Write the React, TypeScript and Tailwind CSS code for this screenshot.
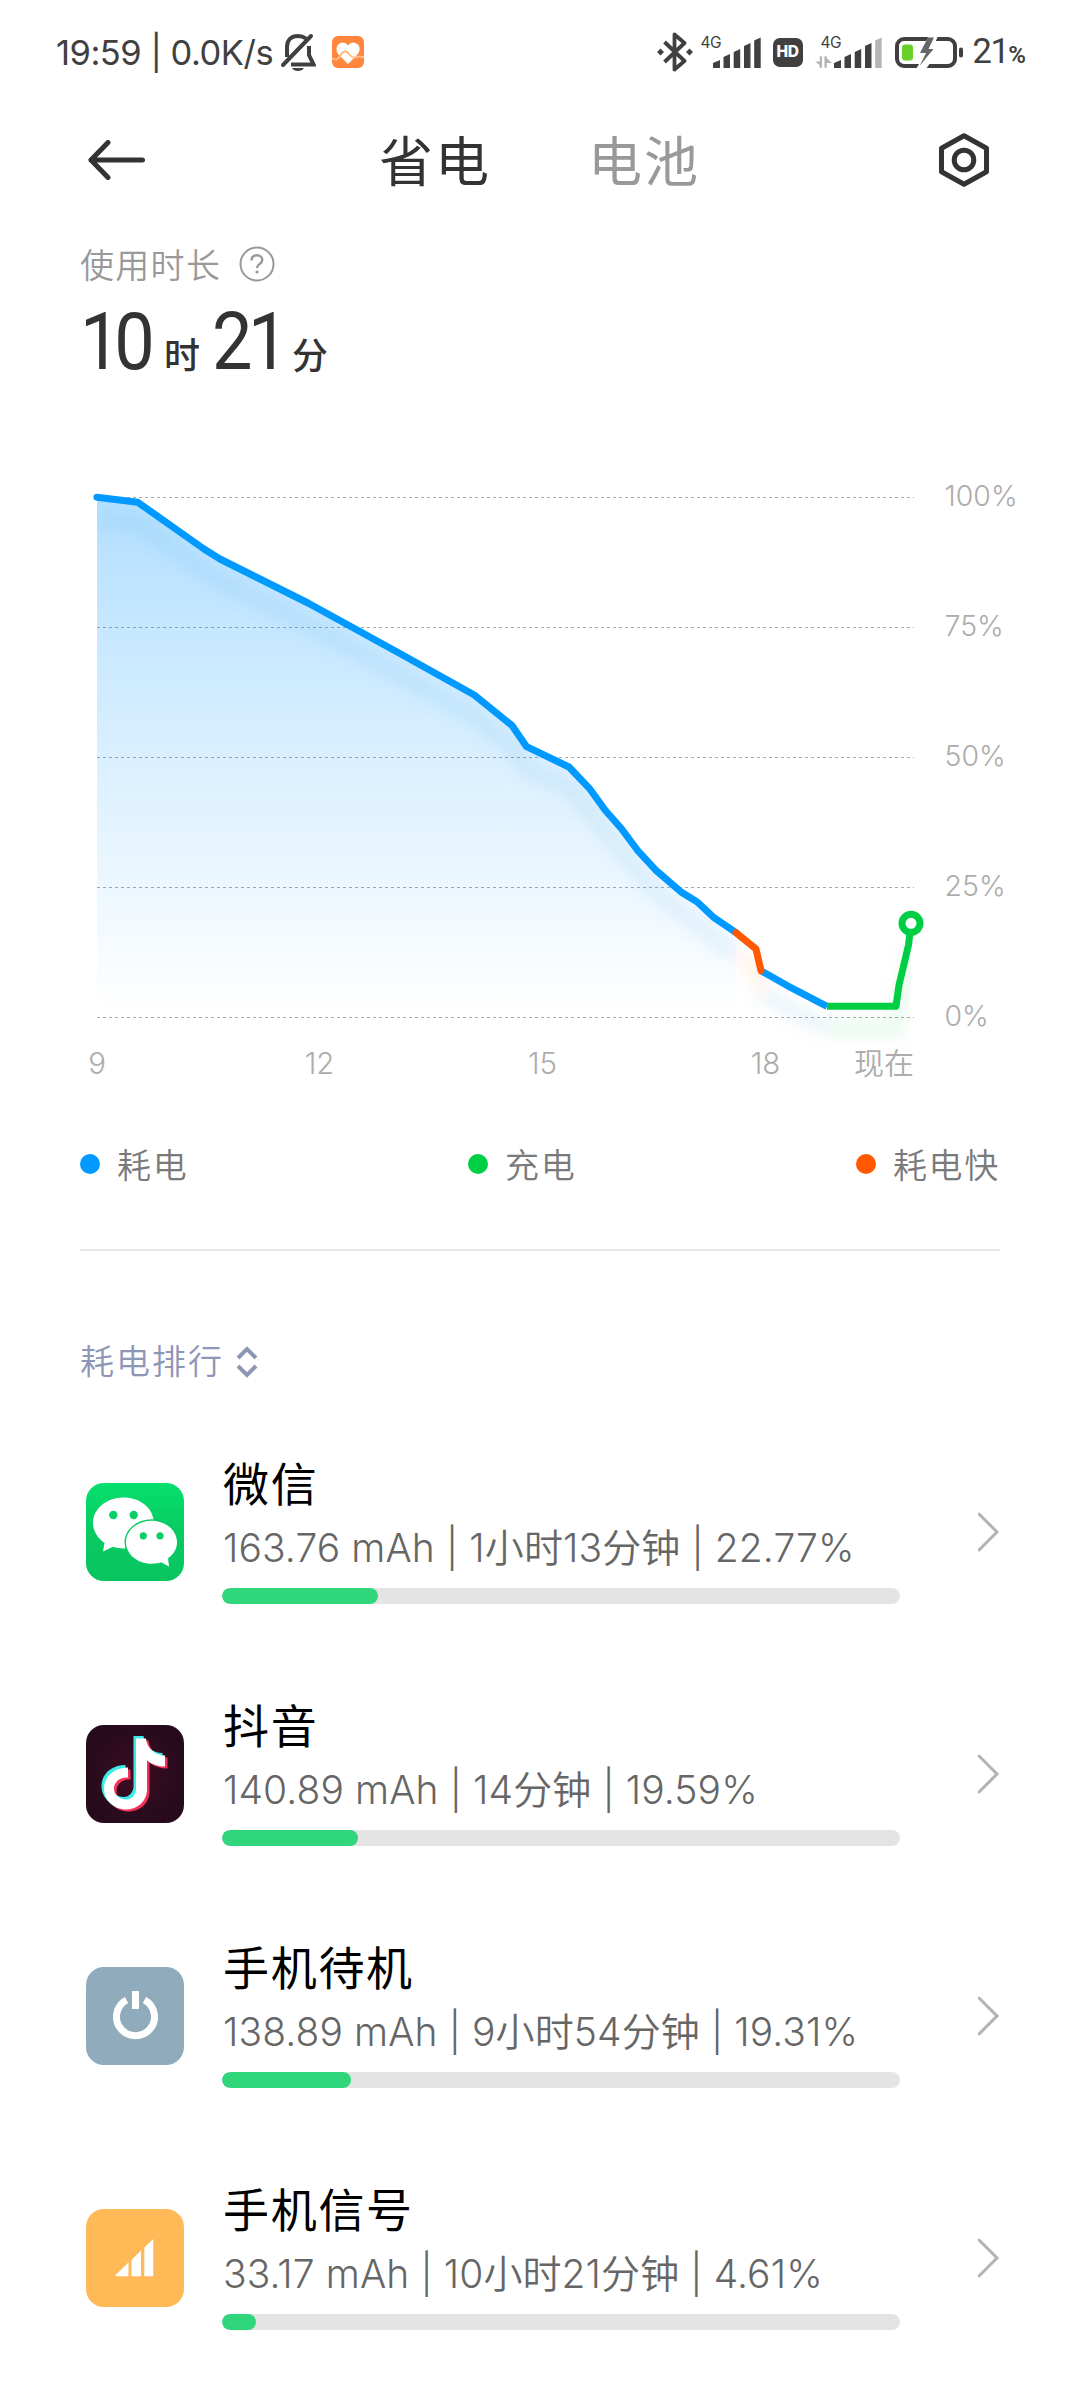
import { type ReactNode } from 'react';

type AppUsage = {
  id: string;
  name: string;
  detail: string;
  percent: number;
  icon: ReactNode;
};

const NOTE_PATH =
  'M50 14 H60 C61 24 69 31 79 31 V42 C72 42 66 40 61 36 V65 C61 76 52 85 40 85 C28 85 18 76 18 64 C18 52 28 43 42 43 V53 C34 52 28 58 28 64 C28 71 34 75 40 75 C46 75 50 70 50 64 Z';

function WeChatIcon() {
  return (
    <svg viewBox="0 0 98 98" className="size-full">
      <defs>
        <linearGradient id="wechat" x1="0" y1="0" x2="0" y2="1">
          <stop offset="0" stopColor="#06df6e" />
          <stop offset="0.5" stopColor="#09cb62" />
          <stop offset="1" stopColor="#08c45f" />
        </linearGradient>
      </defs>
      <rect width="98" height="98" fill="url(#wechat)" />
      <path
        d="M37.5 14.5 C20.500 14.500 7 26 7 40 C7 48 11.500 55 18.500 60 L17 68.500 L27 63.800 C32 65.600 38 65.800 43 65 L67.500 37 C66 24 53.500 14.500 37.500 14.500 Z"
        fill="#fff"
      />
      <path
        d="M65.500 37.800 C79.500 37.800 91 47.300 91 59.200 C91 65.800 87.600 71.500 82 75.200 L83 83.500 L75.200 79.300 C72.200 80.300 69 80.700 65.500 80.700 C51.500 80.700 40 71 40 59.200 C40 47.300 51.500 37.800 65.500 37.800 Z"
        fill="#fff"
        stroke="#09cb62"
        strokeWidth="3"
        paintOrder="stroke"
      />
      <g fill="#09cf64">
        <circle cx="27.300" cy="32" r="4.200" />
        <circle cx="47.700" cy="32" r="4.200" />
        <circle cx="57.300" cy="52.800" r="3.600" />
        <circle cx="74" cy="52.800" r="3.600" />
      </g>
    </svg>
  );
}

function DouyinIcon() {
  return (
    <svg viewBox="0 0 98 98" className="size-full">
      <defs>
        <radialGradient id="douyin">
          <stop offset="0" stopColor="#3d0b22" />
          <stop offset="1" stopColor="#270b1d" />
        </radialGradient>
      </defs>
      <rect width="98" height="98" fill="url(#douyin)" />
      <path d={NOTE_PATH} fill="#f5315a" transform="translate(2.500 1.500)" />
      <path d={NOTE_PATH} fill="#38ece8" transform="translate(-2.500 -3)" />
      <path d={NOTE_PATH} fill="#fff" transform="translate(0 -0.500)" />
    </svg>
  );
}

function StandbyIcon() {
  return (
    <svg viewBox="0 0 98 98" className="size-full">
      <rect width="98" height="98" fill="#90abbc" />
      <path
        d="M40.500 33 A19 19 0 1 0 58.500 33"
        fill="none"
        stroke="#fff"
        strokeWidth="7"
      />
      <rect x="46" y="24" width="7" height="18" rx="0.500" fill="#fff" />
    </svg>
  );
}

function SignalIcon() {
  return (
    <svg viewBox="0 0 98 98" className="size-full">
      <rect width="98" height="98" fill="#ffb957" />
      <path
        d="M29.500 66 L42.500 53.500 V67.300 H30 Z M45.500 51 L55 41.500 V67.300 H45.500 Z M58.300 38.500 L67.300 30 V67.300 H58.300 Z"
        fill="#fff"
      />
    </svg>
  );
}

const apps: AppUsage[] = [
  { id: 'wechat', name: '微信', detail: '163.76 mAh | 1小时13分钟 | 22.77%', percent: 23, icon: <WeChatIcon /> },
  { id: 'douyin', name: '抖音', detail: '140.89 mAh | 14分钟 | 19.59%', percent: 20, icon: <DouyinIcon /> },
  { id: 'standby', name: '手机待机', detail: '138.89 mAh | 9小时54分钟 | 19.31%', percent: 19, icon: <StandbyIcon /> },
  { id: 'signal', name: '手机信号', detail: '33.17 mAh | 10小时21分钟 | 4.61%', percent: 5, icon: <SignalIcon /> },
];

const drain =
  '97,497.300 137.800,502.300 204,549 220,559 308,603 399,653 474.300,695 512,725.500 526.600,746.700 569,767 589.300,788.300 605,810 621.700,829 637.300,850 656.700,871 680.700,891.700 697.300,902 714,917.700 736,932.700';
const fast = '736,932.700 756,949 761,970.700';
const drainTail = '761,970.700 786.700,985.300 827,1006.300';
const charge = '827,1006.300 896,1006.300 899,985 905,960 908.500,945 910.500,928';

const gridLines = [
  { y: 497.5, label: '100%' },
  { y: 627.5, label: '75%' },
  { y: 757.5, label: '50%' },
  { y: 887.5, label: '25%' },
  { y: 1017.5, label: '0%' },
];

const hours = [
  { x: 97, label: '9' },
  { x: 319.5, label: '12' },
  { x: 542.5, label: '15' },
  { x: 765.5, label: '18' },
];

const legend = [
  { label: '耗电', dot: 'bg-[#0099ff]' },
  { label: '充电', dot: 'bg-[#00cf46]' },
  { label: '耗电快', dot: 'bg-[#ff5800]' },
];

function SignalBars({ weak = false }: { weak?: boolean }) {
  return (
    <svg viewBox="0 0 48 31" className="h-[31px] w-12" fill="#404040">
      <path d="M0 31 V26 L7 23 V31 Z" />
      <path d="M10.500 31 V20 L17 17 V31 Z" />
      <path d="M20.700 31 V15 L27.200 12 V31 Z" />
      <path d="M31 31 V9 L37.500 6 V31 Z" />
      <path d="M41.200 31 V3.500 L47.700 0.500 V31 Z" fill={weak ? '#b5b5b5' : '#404040'} />
    </svg>
  );
}

function StatusBar() {
  return (
    <div className="flex h-[104px] items-center pl-[56px] pr-[54px] text-[#404040]">
      <span className="w-[224px] whitespace-pre pt-0.5 text-[34.5px] tracking-[-0.5px]">19:59 | 0.0K/s</span>
      <svg viewBox="0 0 36 40" className="h-10 w-9" fill="none" stroke="#404040" strokeWidth="4">
        <path d="M7 25 V15 C7 8 11 4 18 4 C21 4 24 5 26 6.500 M29 14 V23 L33.500 32.500 H11" />
        <path d="M3 33 L31 4" strokeLinecap="round" />
        <path d="M12 36 H24 C22 40 14 40 12 36 Z" fill="#404040" stroke="none" />
      </svg>
      <svg viewBox="0 0 32 32" className="ml-4 size-8">
        <rect width="32" height="32" rx="6" fill="#ff863c" />
        <path
          d="M16 28 L6.500 18.500 C3.500 15 4 9.500 7.500 7.500 C10.500 5.500 14 6.500 16 9.500 C18 6.500 21.500 5.500 24.500 7.500 C28.500 9.500 28.500 15 25.500 18.500 Z"
          fill="#fff"
        />
        <path
          d="M0 22 C3 24.500 6 24 8 20 C11 14.500 14 14 17 18 C20 22 22 22 25 21 C28 20 29 21 32 21"
          fill="none"
          stroke="#ffbd85"
          strokeWidth="2"
        />
      </svg>

      <div className="ml-auto flex items-center">
        <svg viewBox="0 0 36 40" className="h-10 w-9" fill="none" stroke="#404040" strokeWidth="3.800" strokeLinejoin="round">
          <path d="M7.500 10 L27.500 29 L17.500 37.500 V2.500 L27.500 11 L7.500 30" />
          <path d="M3.500 16.500 L7 20 L3.500 23.500 L0 20 Z M32.500 16.500 L36 20 L32.500 23.500 L29 20 Z" fill="#404040" stroke="none" />
        </svg>
        <div className="ml-2 flex h-8 w-[60px] items-start">
          <span className="mt-[-1px] w-3 text-[15.5px] leading-4 tracking-[-0.5px]">4G</span>
          <div className="pt-px">
            <SignalBars />
          </div>
        </div>
        <span className="ml-3 flex h-[29px] w-[30px] items-center justify-center rounded-[7px] bg-[#404040] text-[15.5px] font-extrabold tracking-[-0.5px] text-white">
          HD
        </span>
        <div className="ml-[11px] flex h-8 w-[69px] items-start">
          <div className="relative h-8 w-5">
            <span className="absolute -top-px left-[7px] text-[15.5px] leading-4 tracking-[-0.5px]">4G</span>
            <svg viewBox="0 0 18 12" className="absolute left-px top-5 h-3 w-[17px]" fill="#b5b5b5">
              <path d="M5 0 H7.500 V12 H5 V9.500 L0 5.500 H5 Z M10 12 H12.500 V7 H18 L12.500 2 V0 H10 Z" />
            </svg>
          </div>
          <div className="pt-px">
            <SignalBars weak />
          </div>
        </div>
        <svg viewBox="0 0 70 32" className="ml-3 h-8 w-[70px]">
          <rect x="2" y="3" width="58" height="27" rx="7" fill="none" stroke="#404040" strokeWidth="4" />
          <rect x="64" y="11.500" width="4" height="10" rx="2" fill="#404040" />
          <rect x="7" y="8.500" width="11" height="16" rx="3" fill="#69cf2b" />
          <path d="M34 0 L23 20 H29 L21 33 H31 L44 14 H37 L43 0 Z" fill="#fff" />
          <path d="M33 1.500 L25 17 H31 L24.500 30 L38.500 13 H33.500 L39 1.500 Z" fill="#666" />
        </svg>
        <div className="ml-2 flex items-baseline font-['Roboto']">
          <span className="text-[34.5px] tracking-[-1.500px]">21</span>
          <span className="text-[24px] font-semibold">%</span>
        </div>
      </div>
    </div>
  );
}

function Header() {
  return (
    <div className="flex h-[112px] items-center pl-[88px] pr-[91px]">
      <svg viewBox="0 0 58 40" className="h-10 w-[58px]" fill="none" stroke="#333" strokeWidth="5" strokeLinecap="round" strokeLinejoin="round">
        <path d="M54.500 20 H3 M20 2.500 L3 20 L20 37.500" />
      </svg>
      <div className="ml-[233px] flex gap-[97px] pt-1.5 text-[54px] leading-none tracking-[2px]">
        <span className="text-[#333]">省电</span>
        <span className="text-[#999]">电池</span>
      </div>
      <svg viewBox="0 0 50 54" className="ml-auto h-[54px] w-[50px]" fill="none" stroke="#333" strokeWidth="5">
        <path d="M25 2.800 L47.500 15.200 V38.800 L25 51.200 L2.500 38.800 V15.200 Z" strokeLinejoin="round" />
        <circle cx="25" cy="27" r="9.800" />
      </svg>
    </div>
  );
}

function BatteryChart() {
  return (
    <svg viewBox="0 440 1080 680" className="h-[680px] w-full font-[350]">
      <defs>
        <linearGradient id="area" x1="0" y1="497" x2="0" y2="1010" gradientUnits="userSpaceOnUse">
          <stop offset="0" stopColor="#0095ff" stopOpacity="0.300" />
          <stop offset="1" stopColor="#0095ff" stopOpacity="0" />
        </linearGradient>
        <filter id="glow" x="60" y="480" width="900" height="600" filterUnits="userSpaceOnUse">
          <feGaussianBlur stdDeviation="7" />
        </filter>
        <clipPath id="plot">
          <rect x="97" y="440" width="814" height="640" />
        </clipPath>
      </defs>

      {gridLines.map(({ y, label }) => (
        <g key={label}>
          <line x1="97" x2="914" y1={y} y2={y} stroke="#a8a8a8" strokeWidth="1" strokeDasharray="3 3" />
          <text x="944.500" y={y + 8.5} fill="#adadad" fontSize="28.500">
            {label}
          </text>
        </g>
      ))}

      <polygon points={`97,1017 ${drain} 736,1017`} fill="url(#area)" />

      <g clipPath="url(#plot)">
        <g
          transform="translate(0 22)"
          filter="url(#glow)"
          fill="none"
          strokeWidth="16"
          strokeOpacity="0.080"
        >
          <polyline points={drain} stroke="#0088cc" />
          <polyline points={fast} stroke="#ff7a20" />
          <polyline points={drainTail} stroke="#0088cc" />
          <polyline points={charge} stroke="#00b040" />
        </g>
      </g>

      <g fill="none" strokeWidth="7" strokeLinejoin="round">
        <polyline points={drain} stroke="#0099ff" strokeLinecap="round" />
        <polyline points={drainTail} stroke="#0099ff" />
        <polyline points={charge} stroke="#00cf46" />
        <polyline points={fast} stroke="#ff5800" strokeLinecap="round" />
        <circle cx="911" cy="923.300" r="9" stroke="#00cf46" fill="#fff" />
      </g>

      {hours.map(({ x, label }) => (
        <text key={label} x={x} y="1074" fill="#adadad" fontSize="29.500" textAnchor="middle">
          {label}
        </text>
      ))}
      <text x="914" y="1074" fill="#adadad" fontSize="30" textAnchor="end">
        现在
      </text>
    </svg>
  );
}

function UsageRow({ name, detail, percent, icon }: AppUsage) {
  return (
    <li className="flex h-[242px] items-center pl-[86px] pr-20">
      <div className="size-[98px] shrink-0 overflow-hidden rounded-[18px]">{icon}</div>
      <div className="mb-1 ml-[38px] w-[678px] shrink-0">
        <h3 className="h-[69px] pl-px text-[46px] leading-[56px] tracking-[1.700px] text-black">{name}</h3>
        <p className="h-[63px] whitespace-nowrap pl-px text-[39px] font-[350] leading-[46px] tracking-[0.1px] text-[#666]">
          {detail}
        </p>
        <div className="h-4 overflow-hidden rounded-full bg-[#e4e4e4]">
          <div className="h-full rounded-full bg-[#2fd67c]" style={{ width: `${percent}%` }} />
        </div>
      </div>
      <svg viewBox="0 0 22 40" className="ml-auto h-10 w-[22px]" fill="none" stroke="#b3b3b3" strokeWidth="3" strokeLinecap="round">
        <path d="M1 2 L19 20 L1 38" />
      </svg>
    </li>
  );
}

function App() {
  return (
    <main className="h-[2400px] w-[1080px] overflow-hidden bg-white font-['Inter','Noto_Sans_CJK_SC',sans-serif]">
      <StatusBar />
      <Header />

      <section className="h-[224px] px-20 pt-[22px]">
        <div className="flex h-[52px] items-center">
          <span className="w-[140px] whitespace-nowrap pt-[3px] text-[34px] font-[350] leading-none tracking-[1.300px] text-[#999]">
            使用时长
          </span>
          <svg viewBox="0 0 36 36" className="ml-[19px] size-9" fill="none" stroke="#999" strokeWidth="2">
            <circle cx="18" cy="18" r="16.500" />
            <path d="M12.500 14.500 C12.500 11 15 9.300 18 9.300 C21 9.300 23.300 11.300 23.300 14 C23.300 18 18 18 18 22" strokeWidth="2.400" />
            <circle cx="18" cy="26" r="1.600" fill="#999" stroke="none" />
          </svg>
        </div>
        <div className="flex items-baseline text-[#333]">
          <span className="w-[84px] origin-left scale-x-[0.9] font-['Roboto'] text-[80px] font-[450] leading-[104px] tracking-[-7px]">
            10
          </span>
          <span className="w-[48px] text-[36px] font-medium">时</span>
          <span className="w-[80px] origin-left scale-x-[0.9] font-['Roboto'] text-[80px] font-[450] leading-[104px] tracking-[-5px]">
            21
          </span>
          <span className="text-[36px] font-medium">分</span>
        </div>
      </section>

      <BatteryChart />

      <div className="mx-20 flex h-[131px] items-start justify-between border-b-2 border-[#e6e6e6] pt-[22px]">
        {legend.map(({ label, dot }) => (
          <div key={label} className="flex h-11 items-center">
            <span className={`size-5 rounded-full ${dot}`} />
            <span className="ml-[17px] pt-[3px] text-[34px] font-[350] leading-none tracking-[1.700px] text-[#7a7a7a]">
              {label}
            </span>
          </div>
        ))}
      </div>

      <button className="mt-[88px] flex h-[46px] items-center pl-20 text-[#8e96b5]">
        <span className="text-[34px] font-[350] leading-none tracking-[2px]">耗电排行</span>
        <svg viewBox="0 0 22 32" className="ml-3 h-8 w-[22px]" fill="none" stroke="currentColor" strokeWidth="4">
          <path d="M2 12 L11 3 L20 12 M2 20 L11 29 L20 20" />
        </svg>
      </button>

      <ul className="mt-[26px]">
        {apps.map((app) => (
          <UsageRow key={app.id} {...app} />
        ))}
      </ul>
    </main>
  );
}

export default App;
